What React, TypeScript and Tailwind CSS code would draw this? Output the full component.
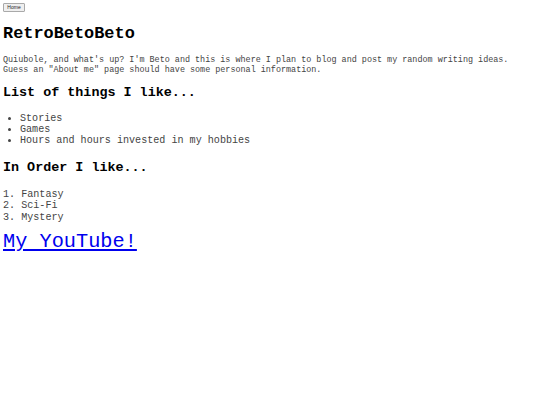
export default function App() {
  const mono = '"Courier New", "Nimbus Mono PS", "Nimbus Mono L", FreeMono, Courier, "Liberation Mono", monospace';
  return (
    <div className="bg-white w-[540px] h-[405px] overflow-hidden text-black" style={{ fontFamily: mono }}>
      <div className="pt-[3px] pl-[3px]">
        <button className="block h-[9px] w-[22px] border border-[#a9a9a9] bg-[#efefef] rounded-[1px] text-[5px] leading-[7px] text-[#222] p-0" style={{ fontFamily: '"Liberation Sans", Arial, sans-serif' }}>Home</button>
      </div>
      <div className="pl-[3px]">
        <h1 className="text-[16.9px] font-bold leading-[20px] mt-[12px]">RetroBetoBeto</h1>
        <p className="text-[8.44px] leading-[10px] text-[#444] mt-[11px]">
          Quiubole, and what's up? I'm Beto and this is where I plan to blog and post my random writing ideas.
          <br />
          Guess an "About me" page should have some personal information.
        </p>
        <h2 className="text-[13.4px] font-bold leading-[16px] mt-[10px]">List of things I like...</h2>
        <ul className="list-disc pl-[17px] mt-[12px] text-[10.1px] leading-[11.2px] text-[#444]">
          <li>Stories</li>
          <li>Games</li>
          <li>Hours and hours invested in my hobbies</li>
        </ul>
        <h2 className="text-[13.4px] font-bold leading-[16px] mt-[13px]">In Order I like...</h2>
        <ol className="list-decimal list-inside pl-0 mt-[13px] text-[10.1px] leading-[11.5px] text-[#444]">
          <li>Fantasy</li>
          <li>Sci-Fi</li>
          <li>Mystery</li>
        </ol>
        <a href="#" className="inline-block text-[20.3px] leading-[24px] text-[#0000ee] underline mt-[7px]">My YouTube!</a>
      </div>
    </div>
  );
}
